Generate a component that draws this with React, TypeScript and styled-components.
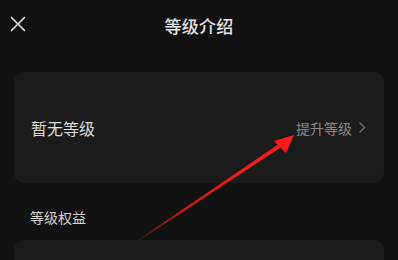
import React from "react";
import styled, { createGlobalStyle } from "styled-components";

const Global = createGlobalStyle`
  html, body { margin: 0; padding: 0; background: #111111; }
  body { font-family: "Noto Sans CJK SC", "Noto Sans", sans-serif; }
`;

const Page = styled.div`
  position: relative;
  width: 398px;
  height: 260px;
  overflow: hidden;
  background: #111111;
`;

const Header = styled.div`
  height: 48px;
  display: flex;
  align-items: center;
  justify-content: center;
  position: relative;
`;

const CloseBtn = styled.div`
  position: absolute;
  left: 10px;
  top: 16px;
  width: 16px;
  height: 16px;
  display: flex;
`;

const Title = styled.div`
  color: #e6e6e6;
  font-size: 17px;
  font-weight: 500;
  letter-spacing: 0.3px;
  margin-top: 2px;
`;

const Body = styled.div`
  padding: 24px 14px 0;
  display: flex;
  flex-direction: column;
`;

const Card = styled.div<{ $h: number }>`
  flex-shrink: 0;
  height: ${(p) => p.$h}px;
  background: #1b1b1b;
  border-radius: 10px;
  display: flex;
  align-items: center;
  justify-content: space-between;
  padding: 0 18px 0 17px;
  box-sizing: border-box;
`;

const LevelText = styled.div`
  color: #dcdcdc;
  font-size: 16px;
`;

const Upgrade = styled.div`
  display: flex;
  align-items: center;
  gap: 6px;
  color: #8a8a8a;
  font-size: 14px;
`;

const SectionTitle = styled.div`
  flex-shrink: 0;
  color: #d4d4d4;
  font-size: 14px;
  padding: 24px 16px 13px;
  line-height: 20px;
`;

const Overlay = styled.svg`
  position: absolute;
  left: 0;
  top: 0;
  pointer-events: none;
`;

export default function App() {
  return (
    <Page>
      <Global />
      <Header>
        <CloseBtn>
          <svg width="16" height="16" viewBox="0 0 16 16">
            <path d="M1.5 1.5 L14.5 14.5 M14.5 1.5 L1.5 14.5" stroke="#e0e0e0" strokeWidth="1.7" strokeLinecap="round" />
          </svg>
        </CloseBtn>
        <Title>等级介绍</Title>
      </Header>
      <Body>
        <Card $h={111}>
          <LevelText>暂无等级</LevelText>
          <Upgrade>
            提升等级
            <svg width="8" height="13" viewBox="0 0 8 13">
              <path d="M1.5 1.5 L6.5 6.5 L1.5 11.5" fill="none" stroke="#6e6e6e" strokeWidth="1.4" />
            </svg>
          </Upgrade>
        </Card>
        <SectionTitle>等级权益</SectionTitle>
        <Card $h={60} />
      </Body>
      <Overlay width="398" height="260" viewBox="0 0 398 260">
        <defs>
          <linearGradient id="fade" x1="138" y1="240" x2="285" y2="141" gradientUnits="userSpaceOnUse">
            <stop offset="0" stopColor="#ff1a1a" stopOpacity="0.15" />
            <stop offset="0.3" stopColor="#ff1a1a" stopOpacity="0.85" />
            <stop offset="1" stopColor="#ff1a1a" stopOpacity="1" />
          </linearGradient>
        </defs>
        <polygon points="138,240 281,142.5 283,146 140,240" fill="url(#fade)" />
        <polygon points="294,135 274,141 286,153" fill="#ff1a1a" />
      </Overlay>
    </Page>
  );
}
